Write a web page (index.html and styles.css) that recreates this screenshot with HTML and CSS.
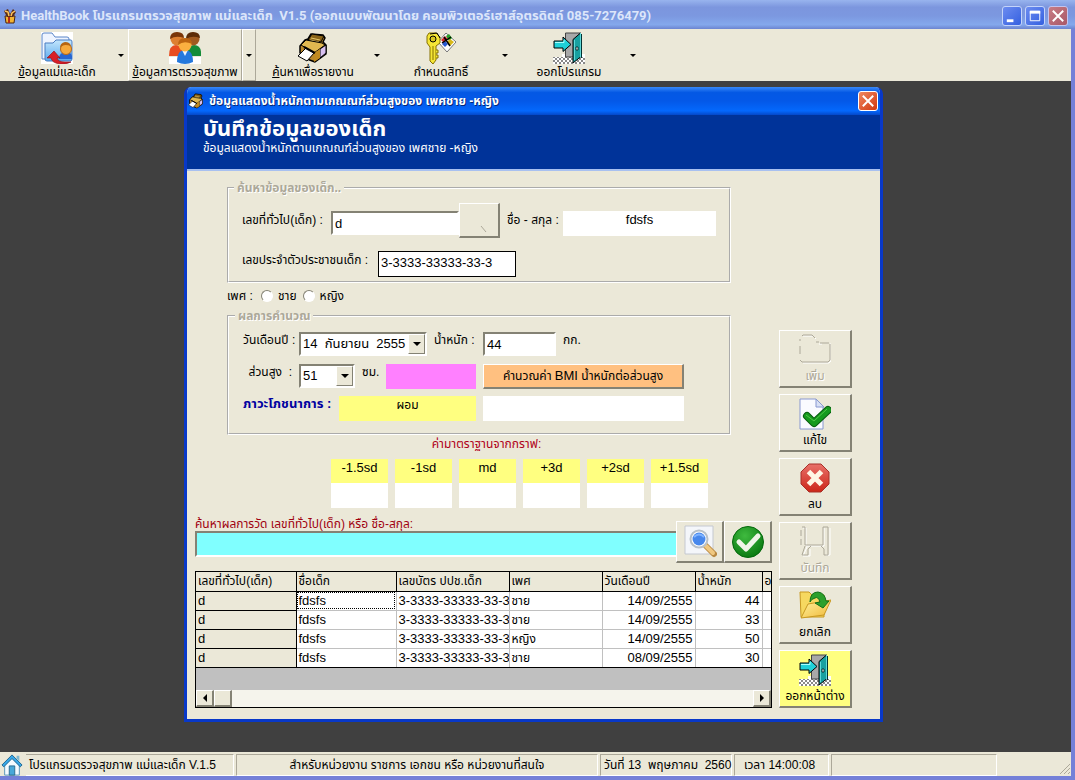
FILE: index.html
```html
<!DOCTYPE html>
<html lang="th">
<head>
<meta charset="utf-8">
<title>HealthBook</title>
<link rel="stylesheet" href="styles.css">
</head>
<body>
<svg class="defs" aria-hidden="true">
  <symbol id="door" viewBox="0 0 32 32">
    <path d="M0 25h9v-3h23v10H0z" fill="#fff"/>
    <path d="M0 25h32v7H0z" fill="url(#hatch)"/>
    <path d="M12.500 1h15v24h-15z" fill="#a8a8a8" stroke="#444"/>
    <path d="M20 7.500L27.500 1v24L20 31z" fill="#18a0a0" stroke="#000"/>
    <path d="M27.500 1v24M21.500 8v20" stroke="#60d8d8" stroke-width="1"/>
    <path d="M28.500 2v24" stroke="#033" stroke-width="1"/>
    <path d="M1 9h9V5l8 7.500-8 7V16H1z" fill="#20d0d8" stroke="#000"/>
    <path d="M2 10.500h9V8" fill="none" stroke="#aff"/>
    <path d="M23 15h2v3h-2z" fill="#dff" stroke="#000" stroke-width=".7"/>
  </symbol>
  <symbol id="printer" viewBox="0 0 32 32">
    <path d="M3 14L8 8l3-1 3-5 12 1 2 3-2 4 3 3v9L18 30l-8-3-7-6z" fill="#b8862a" stroke="#000" stroke-width="1.500" stroke-linejoin="round"/>
    <path d="M11 8l4-6 12 2-3 6z" fill="#8a6418" stroke="#000"/>
    <path d="M14 6l9 2M13 8l9 2" stroke="#e8c868"/>
    <path d="M4 13l5-5 16 3 3 2-11 8z" fill="#e0b850" stroke="#000"/>
    <path d="M23 17l6-4v8l-6 5z" fill="#d8c0f0" stroke="#000"/>
    <path d="M17 21l6-4v9l-6 4z" fill="#c08a20"/>
    <path d="M1 24l8-8 8 5-7 8z" fill="#fff" stroke="#000"/>
    <path d="M7 15l11 6" stroke="#000" stroke-width="2"/>
  </symbol>
  <pattern id="hatch" width="4" height="4" patternUnits="userSpaceOnUse"><path d="M0 0h2v2H0zM2 2h2v2H2z" fill="#888"/></pattern>
  <radialGradient id="greenBall" cx=".4" cy=".3" r=".8"><stop offset="0" stop-color="#3fba3f"/><stop offset="1" stop-color="#04730c"/></radialGradient>
  <linearGradient id="folderBlue" x2="0" y2="1"><stop offset="0" stop-color="#c4e6fc"/><stop offset="1" stop-color="#58a8ee"/></linearGradient>
  <linearGradient id="redStop" x2="0" y2="1"><stop offset="0" stop-color="#e87068"/><stop offset="1" stop-color="#cc2618"/></linearGradient>
  <linearGradient id="folderYellow" x2="1" y2="1"><stop offset="0" stop-color="#fff3a0"/><stop offset="1" stop-color="#f0b838"/></linearGradient>
</svg>

<div class="app">
  <header class="titlebar">
    <svg class="icon16" viewBox="0 0 16 16"><path d="M3 8h10l-1 7H4z" fill="#f3b431" stroke="#4b2410"/><path d="M6 8h2v7H6z" fill="#b52b18"/><path d="M2 3l4-2 2 5 3-5 3 3-3 5H5z" fill="#592b18"/><path d="M3 3l3 1 1 4M13 3l-3 2-1 3" stroke="#ffc45a" stroke-width="1.500" fill="none"/></svg>
    <h1>HealthBook โปรแกรมตรวจสุขภาพ แม่และเด็ก&nbsp; V1.5 (ออกแบบพัฒนาโดย คอมพิวเตอร์เฮาส์อุตรดิตถ์ 085-7276479)</h1>
    <div class="caption-buttons">
      <button class="cap" aria-label="Minimize"><svg viewBox="0 0 19 19"><path d="M4 13h7v3H4z" fill="#fff"/></svg></button>
      <button class="cap" aria-label="Maximize"><svg viewBox="0 0 19 19"><path d="M4.500 4.500h10v10h-10z" fill="none" stroke="#fff"/><path d="M4 4h11v3H4z" fill="#fff"/></svg></button>
      <button class="cap cap-close dim" aria-label="Close"><svg viewBox="0 0 19 19"><path d="M4 4l11 11M15 4L4 15" stroke="#fff" stroke-width="2"/></svg></button>
    </div>
  </header>

  <div class="frame">
    <nav class="toolbar">
      <div class="tool">
        <button class="tool-main">
          <svg viewBox="0 0 32 32"><path d="M0 0h32v32H0z" fill="#fff"/><path d="M1 27V3q0-2 2-2h8l3 4h12q2 0 2 2v20z" fill="#eef4ff" stroke="#5b86c8"/><path d="M4 27V11h8l3-3h15q1 0 1 2v17q0 2-2 2H6q-2 0-2-2z" fill="url(#folderBlue)" stroke="#4a7cc0"/><path d="M18 27q0-7 7-7t6 7z" fill="#2866d0"/><circle cx="25" cy="17" r="5.500" fill="#f6a93c" stroke="#b86818"/><path d="M19 16q3-5 11-2-1-4-6-4-5 1-5 6z" fill="#b66512"/><path d="M6 26l7-7 6 7h-3q1 4 8 4h6q-6 3-11 2-8-1-9-6z" fill="#d81e28" stroke="#8c0c14" stroke-width=".6"/></svg>
          <span><u>ข้</u>อมูลแม่และเด็ก</span>
        </button>
        <button class="tool-drop" aria-label="เมนูย่อย"><i class="tri"></i></button>
      </div>
      <div class="tool raised">
        <button class="tool-main">
          <svg viewBox="0 0 32 32"><path d="M0 25h32v7H0z" fill="#fff"/><path d="M0 24q0-11 7-11t8 11z" fill="#e84d20"/><path d="M17 24q0-11 8-11t7 11z" fill="#148c38"/><circle cx="8" cy="7" r="6.500" fill="#dd8030"/><path d="M1 7q0-7 7-7t7 6q-8-3-14 1z" fill="#7a3608"/><circle cx="24" cy="7" r="6.500" fill="#a05a20"/><path d="M17 7q0-7 7-7t7 6q-8-3-14 1z" fill="#5c2c08"/><path d="M8 30q0-12 8-12t8 12q-8 4-16 0z" fill="#2478dc"/><path d="M13 18l3 6 3-6z" fill="#e8f2ff"/><circle cx="16" cy="13" r="6.500" fill="#fbb040"/><path d="M9 13q0-7 7-7t7 6q-8-4-14 1z" fill="#bc6410"/></svg>
          <span><u>ข้</u>อมูลการตรวจสุขภาพ</span>
        </button>
        <button class="tool-drop" aria-label="เมนูย่อย"><i class="tri"></i></button>
      </div>
      <div class="tool">
        <button class="tool-main"><svg><use href="#printer"/></svg><span><u>ค้</u>นหาเพื่อรายงาน</span></button>
        <button class="tool-drop" aria-label="เมนูย่อย"><i class="tri"></i></button>
      </div>
      <div class="tool">
        <button class="tool-main">
          <svg viewBox="0 0 32 32"><path d="M13 10l8-9 10 9-9 10z" fill="#fff" stroke="#777"/><path d="M16 8l4-4 3 3-4 4z" fill="#d02828"/><path d="M21 4l3-2 3 4-3 3z" fill="#28a028"/><path d="M17 12l3-3 3 3-3 3z" fill="#2858d0"/><path d="M22 10l3-3 4 3-4 4z" fill="#d8b818"/><path d="M17 11l9-6M19 5l6 9" stroke="#000" stroke-width="1.500"/><path d="M4 1h7l4 4v6l-4 3v14l-3 4-3-3V15L2 11V4z" fill="#f5e636" stroke="#857000"/><path d="M8 14v14M11 18h2v3h-2M11 23h2v3h-2" stroke="#857000" fill="#f5e636"/><circle cx="8" cy="7" r="3" fill="#d8c820" stroke="#000"/><path d="M5 2l7-1 3 5" fill="none" stroke="#000"/></svg>
          <span>กำหนดสิทธิ์</span>
        </button>
        <button class="tool-drop" aria-label="เมนูย่อย"><i class="tri"></i></button>
      </div>
      <div class="tool">
        <button class="tool-main"><svg><use href="#door"/></svg><span>ออกโปรแกรม</span></button>
        <button class="tool-drop" aria-label="เมนูย่อย"><i class="tri"></i></button>
      </div>
    </nav>

    <main class="desktop">
      <section class="dialog">
        <header class="dialog-title">
          <svg class="icon16" viewBox="0 0 32 32"><use href="#printer"/></svg>
          <h2>ข้อมูลแสดงน้ำหนักตามเกณณฑ์ส่วนสูงของ เพศชาย -หญิง</h2>
          <button class="cap cap-close" aria-label="Close"><svg viewBox="0 0 19 19"><path d="M4 4l11 11M15 4L4 15" stroke="#fff" stroke-width="2"/></svg></button>
        </header>
        <div class="banner">
          <h3>บันทึกข้อมูลของเด็ก</h3>
          <p>ข้อมูลแสดงน้ำหนักตามเกณณฑ์ส่วนสูงของ เพศชาย -หญิง</p>
        </div>
        <div class="dialog-body">
          <form class="content">
            <div class="panels">
              <fieldset class="search-child">
                <legend>ค้นหาข้อมูลของเด็ก..</legend>
                <div class="line line-id">
                  <label class="lbl-id" for="childId">เลขที่ทั่วไป(เด็ก) :</label>
                  <input id="childId" class="field in-id" type="text" value="d">
                  <button type="button" class="btn btn-pick" aria-label="ค้นหา"><svg viewBox="0 0 8 8"><path d="M1 1l5 6" stroke="#aca899"/></svg></button>
                  <label class="lbl-name" for="childName">ชื่อ - สกุล :</label>
                  <output id="childName" class="box box-name">fdsfs</output>
                </div>
                <div class="line">
                  <label class="lbl-card" for="cardNo">เลขประจำตัวประชาชนเด็ก :</label>
                  <input id="cardNo" class="in-card" type="text" value="3-3333-33333-33-3">
                </div>
              </fieldset>
              <div class="sex" role="radiogroup" aria-label="เพศ">
                <span>เพศ :</span>
                <label><input type="radio" name="sex">ชาย</label>
                <label><input type="radio" name="sex">หญิง</label>
              </div>
              <fieldset class="result">
                <legend>ผลการคำนวณ</legend>
                <div class="pair">
                  <div class="left">
                    <label class="lbl-short" for="date">วันเดือนปี :</label>
                    <span class="combo combo-date"><select id="date"><option>14 &nbsp;กันยายน &nbsp;2555</option></select><i class="arrow"><i class="tri"></i></i></span>
                    <label class="lbl-unit" for="weight">น้ำหนัก :</label>
                  </div>
                  <input id="weight" class="field in-weight" type="text" value="44">
                  <span>กก.</span>
                </div>
                <div class="pair">
                  <div class="left">
                    <label class="lbl-short" for="height">ส่วนสูง &nbsp;:</label>
                    <span class="combo combo-height"><select id="height"><option>51</option></select><i class="arrow"><i class="tri"></i></i></span>
                    <span class="unit">ซม.</span>
                    <output class="box pink" aria-label="BMI"></output>
                  </div>
                  <button type="button" class="btn btn-bmi">คำนวณค่า <span class="latin">BMI</span> น้ำหนักต่อส่วนสูง</button>
                </div>
                <div class="pair">
                  <div class="left">
                    <label class="lbl-status" for="status">ภาวะโภชนาการ :</label>
                    <output id="status" class="box yellow">ผอม</output>
                  </div>
                  <output class="box box-wide" aria-label="ผลการคำนวณ"></output>
                </div>
              </fieldset>
            </div>

            <p class="std-title">ค่ามาตราฐานจากกราฟ:</p>
            <dl class="std">
              <div><dt>-1.5sd</dt><dd></dd></div>
              <div><dt>-1sd</dt><dd></dd></div>
              <div><dt>md</dt><dd></dd></div>
              <div><dt>+3d</dt><dd></dd></div>
              <div><dt>+2sd</dt><dd></dd></div>
              <div><dt>+1.5sd</dt><dd></dd></div>
            </dl>

            <div class="lookup">
              <div class="lookup-field">
                <label for="lookup">ค้นหาผลการวัด เลขที่ทั่วไป(เด็ก) หรือ ชื่อ-สกุล:</label>
                <input id="lookup" class="field" type="text">
              </div>
              <button type="button" class="btn btn-icon" aria-label="ค้นหา"><svg viewBox="0 0 34 34"><path d="M2 1h28v28H2z" fill="#f4f6fa" stroke="#c4c8d0"/><path d="M23 21l8 8" stroke="#b88840" stroke-width="6" stroke-linecap="round"/><path d="M23 21l7 7" stroke="#f0c880" stroke-width="4" stroke-linecap="round"/><circle cx="16" cy="14" r="8.500" fill="#fff" stroke="#b8c0c8" stroke-width="2"/><circle cx="16" cy="14" r="6.500" fill="#4888ec"/><path d="M11 12q5-5 10 0" stroke="#80b4ff" stroke-width="2" fill="none"/></svg></button>
              <button type="button" class="btn btn-icon" aria-label="ตกลง"><svg viewBox="0 0 34 34"><circle cx="17" cy="17" r="15.500" fill="url(#greenBall)" stroke="#04690c"/><path d="M8 17l7 7 12-13" fill="none" stroke="#f0f5e8" stroke-width="5" stroke-linecap="round" stroke-linejoin="round"/></svg></button>
            </div>

            <div class="grid">
              <table>
                <colgroup><col class="c100"><col class="c100"><col class="c113"><col class="c93"><col class="c93"><col class="c67"><col></colgroup>
                <thead><tr><th>เลขที่ทั่วไป(เด็ก)</th><th>ชื่อเด็ก</th><th>เลขบัตร ปปช.เด็ก</th><th>เพศ</th><th>วันเดือนปี</th><th>น้ำหนัก</th><th>อ</th></tr></thead>
                <tbody>
                  <tr><th>d</th><td class="focus">fdsfs</td><td>3-3333-33333-33-3</td><td class="thai-cell">ชาย</td><td class="num">14/09/2555</td><td class="num">44</td><td></td></tr>
                  <tr><th>d</th><td>fdsfs</td><td>3-3333-33333-33-3</td><td class="thai-cell">ชาย</td><td class="num">14/09/2555</td><td class="num">33</td><td></td></tr>
                  <tr><th>d</th><td>fdsfs</td><td>3-3333-33333-33-3</td><td class="thai-cell">หญิง</td><td class="num">14/09/2555</td><td class="num">50</td><td></td></tr>
                  <tr><th>d</th><td>fdsfs</td><td>3-3333-33333-33-3</td><td class="thai-cell">ชาย</td><td class="num">08/09/2555</td><td class="num">30</td><td></td></tr>
                </tbody>
              </table>
              <div class="scroll">
                <button type="button" class="btn" aria-label="เลื่อนซ้าย"><i class="tri-left"></i></button>
                <span class="btn thumb"></span>
                <button type="button" class="btn end" aria-label="เลื่อนขวา"><i class="tri-right"></i></button>
              </div>
            </div>
          </form>

          <aside class="actions">
            <button class="btn" disabled><svg viewBox="0 0 32 32"><path d="M4 2h10l3 3M20 10h3M32 9v18l-2 2H4" fill="none" stroke="#fff"/><path d="M1 7V5M3 2l1-1h9l3 3M17 8h3M21 9h9M31 10v16l-2 2H3l-2-2M1 12v8" fill="none" stroke="#aca899"/></svg><span>เพิ่ม</span></button>
            <button class="btn"><svg viewBox="0 0 32 32"><path d="M1 1h16l7 7v23H1z" fill="#fafbff" stroke="#8898d0"/><path d="M17 1v8h8z" fill="#d8e0f4" stroke="#8898d0"/><path d="M8 18l7 7L29 12" fill="none" stroke="#085c10" stroke-width="8" stroke-linecap="round" stroke-linejoin="round"/><path d="M8 18l7 7L29 12" fill="none" stroke="#169a1e" stroke-width="6" stroke-linecap="round" stroke-linejoin="round"/><path d="M7 17l8 6L28 11" fill="none" stroke="#50c848"/></svg><span>แก้ไข</span></button>
            <button class="btn"><svg viewBox="0 0 32 32"><path d="M10 2h12l8 8v12l-8 8H10l-8-8V10z" fill="url(#redStop)" stroke="#a83028"/><path d="M9.500 9.500l13 13M22.500 9.500l-13 13" stroke="#fff6e4" stroke-width="5"/></svg><span>ลบ</span></button>
            <button class="btn" disabled><svg viewBox="0 0 32 32"><path d="M4 2h3v18h18V2M8 21l-4 9h7v-7M27 29h4V2" fill="none" stroke="#fff"/><path d="M3 1h3v18h18V1h5v28h-4v-6l-3-3M6 20l-3 9h6v-6l3-3M2 4v6M2 13v6" fill="none" stroke="#aca899"/></svg><span>บันทึก</span></button>
            <button class="btn"><svg viewBox="0 0 32 32"><path d="M1 2h9l3 3h12v22H2z" fill="#f6d860" stroke="#c89820"/><path d="M2 28l7-14 23-4-7 15z" fill="url(#folderYellow)" stroke="#c89820"/><path d="M11 12q0-10 8-10 7 1 8 9h3l-6 7-8-5 5-1q-2-6-5-4-4 1-5 4z" fill="#2ca02c" stroke="#107018"/></svg><span>ยกเลิก</span></button>
            <button class="btn exit"><svg><use href="#door"/></svg><span>ออกหน้าต่าง</span></button>
          </aside>
        </div>
      </section>
    </main>

    <footer class="status">
      <svg viewBox="0 0 24 24"><path d="M4 12v11h16V12l-8-8z" fill="#f4fbff" stroke="#5090b8"/><path d="M9 13h6v10H9z" fill="#48a8d8" stroke="#28688c"/><path d="M1 12L12 1l11 11-2 2-9-9-9 9z" fill="#38a8e8" stroke="#18608c"/><path d="M17 2h3v6l-3-3z" fill="#80b8d0"/></svg>
      <span class="s1">โปรแกรมตรวจสุขภาพ แม่และเด็ก V.1.5</span>
      <span class="s2">สำหรับหน่วยงาน ราชการ เอกชน หรือ หน่วยงานที่สนใจ</span>
      <span class="s3">วันที่ 13 &nbsp;พฤษภาคม &nbsp;2560</span>
      <span class="s4">เวลา 14:00:08</span>
      <span class="s5"></span>
      <svg class="grip" viewBox="0 0 12 12"><path d="M11 1L1 11M11 5l-6 6M11 9l-2 2" stroke="#aca899"/></svg>
    </footer>
  </div>
</div>
</body>
</html>
```
FILE: styles.css
```css
* { box-sizing: border-box; }
body {
  margin: 0;
  background: #404040;
  color: #000;
  font: 12px/14px "Liberation Sans", "Noto Sans Thai", sans-serif;
}
h1, h2, h3, p, dl, dd { margin: 0; }
button, input, select { font: inherit; color: inherit; }
button { padding: 0; }
.defs { position: absolute; width: 0; height: 0; }
.icon16 { width: 16px; height: 16px; flex: none; }

.app { display: flex; flex-direction: column; min-height: 100vh; background: #7480d8; }

.titlebar {
  display: flex; align-items: center; gap: 3px;
  height: 29px; padding: 2px 7px 0 2px;
  background: linear-gradient(#98b4ee 0, #7c96de 25%, #7c98e0 55%, #84a8ec 85%, #6c84d0);
  color: #dce6fa;
}
.titlebar h1 { flex: 1; font: bold 13px/20px Roboto, "Noto Sans Thai", sans-serif; white-space: nowrap; }
.caption-buttons { display: flex; gap: 3px; }
.cap {
  width: 20px; height: 20px; flex: none;
  border: 1px solid #c4d4fa; border-radius: 3px;
  background: linear-gradient(135deg, #6c8cf0, #3460e0);
}
.cap svg { display: block; width: 18px; height: 18px; }
.cap-close { border-color: #fff; background: linear-gradient(135deg, #f08860, #d03810); }
.cap-close.dim { border-color: #c4c4ee; background: linear-gradient(135deg, #c87c84, #a85868); }

.frame { flex: 1; display: flex; flex-direction: column; margin: 0 4px 4px 0; background: #ebe8d8; }

.toolbar { display: flex; height: 52px; }
.tool { display: flex; width: 128px; }
.tool-main {
  width: 114px; border: 1px solid transparent; background: none;
  display: flex; flex-direction: column; align-items: center; gap: 1px;
}
.tool-main svg { width: 32px; height: 32px; margin-top: 2px; flex: none; }
.tool-main span { line-height: 14px; white-space: nowrap; }
.tool-drop { width: 14px; border: 1px solid transparent; background: none; display: flex; align-items: center; justify-content: center; }
.raised .tool-main, .raised .tool-drop { border-color: #fff #aca899 #aca899 #fff; }
.tri { border: 3px solid transparent; border-top-color: #000; border-bottom: 0; }

.desktop { flex: 1; padding: 6px 188px 30px 184px; background: #404040; }
.dialog {
  min-width: 690px; border: 3px solid #0838c8; border-top: 0;
  border-radius: 7px 7px 0 0; background: #ebe8d8; overflow: hidden;
}
.dialog-title {
  display: flex; align-items: center; gap: 5px; height: 28px; padding: 0 2px 0 1px;
  background: linear-gradient(#3888f8 0, #0458e4 20%, #0458e8 50%, #0468fc 85%, #0448c8);
  color: #fff;
}
.dialog-title h2 { flex: 1; font-size: 12px; line-height: 20px; text-shadow: 1px 1px #042878; white-space: nowrap; }
.banner { height: 56px; padding: 2px 16px; background: #003399; border-bottom: 2px solid #a8c0f0; color: #fff; }
.banner h3 { font-size: 22px; line-height: 24px; }
.banner p { line-height: 14px; }

.dialog-body { display: flex; gap: 7px; padding: 10px 28px 11px 8px; }
.content { flex: 1; min-width: 0; }
.panels { margin: 0 41px 0 32px; }
fieldset { margin: 0; min-width: 0; border: 2px groove #fff; }
legend { margin-left: -8px; padding: 0 3px; line-height: 14px; font-weight: bold; color: #aca899; text-shadow: 1px 1px #fff; }
label { white-space: nowrap; }

.line, .pair, .left { display: flex; align-items: flex-start; }
.search-child { padding: 8px 13px 6px; height: 102px; }
.line-id { height: 48px; align-items: stretch; }
.line-id > label { padding-top: 10px; }
.lbl-id { width: 89px; }
.lbl-name { margin-left: 7px; width: 56px; }
.lbl-card { width: 136px; padding-top: 2px; }
.field {
  min-width: 0; height: 24px; padding: 0 2px; border: 2px solid; border-color: #848274 #fff #fff #848274;
  background: #fff; font-size: 13px; border-radius: 0;
}
.in-id { flex: 1; margin-top: 8px; }
.in-card { width: 138px; height: 26px; border: 1px solid #000; padding: 0 2px 4px; background: #fff; font-size: 13px; }
.btn {
  border: solid; border-width: 1px 2px 2px 1px; border-color: #fff #848274 #848274 #fff; background: #ebe8d8; border-radius: 0;
}
.btn-pick { width: 41px; height: 35px; display: flex; justify-content: center; align-items: flex-end; padding: 0 0 3px 10px; }
.btn-pick svg { width: 8px; height: 8px; }
.box { display: block; height: 25px; background: #fff; text-align: center; line-height: 18px; font-size: 13px; }
.box-name { width: 153px; margin-top: 8px; }

.sex { display: flex; align-items: center; gap: 6px; height: 26px; }
.sex span { width: 28px; white-space: nowrap; }
.sex label { display: flex; align-items: center; gap: 5px; }
.sex input {
  appearance: none; width: 12px; height: 12px; margin: 0; border-radius: 50%;
  background: #fff; border: 1px solid; border-color: #848274 #fff #fff #848274;
}

.result { padding: 9px 14px 0; height: 126px; }
.pair { height: 32px; }
.left { width: 240px; gap: 7px; padding-right: 7px; }
.left label, .unit, .pair > span { padding-top: 1px; }
.pair > span { margin-left: 7px; }
.lbl-short { width: 49px; text-align: right; }
.left .lbl-status { width: 89px; font-size: 13px; font-weight: bold; color: #0000a0; }
.combo { position: relative; height: 24px; border: 2px solid; border-color: #848274 #fff #fff #848274; background: #fff; }
.combo select { appearance: none; width: 100%; height: 20px; border: 0; padding: 0 2px; background: none; }
.combo-date { width: 128px; }
.combo-date, .combo-height { font-size: 13px; }
.combo-height { width: 56px; }
.arrow {
  position: absolute; top: 0; right: 0; bottom: 0; width: 17px; pointer-events: none;
  display: flex; align-items: center; justify-content: center;
  background: #ebe8d8; border: 1px solid; border-color: #fff #848274 #848274 #fff;
}
.arrow .tri { border-width: 4px 4px 0; }
.unit { width: 17px; }
.pink { flex: 1; background: #ff80ff; }
.yellow { flex: 1; background: #ffff80; font-size: 12px; }
.in-weight { width: 73px; }
.btn-bmi { width: 201px; height: 25px; background: #ffc080; white-space: nowrap; }
.latin { font-size: 13px; }
.box-wide { width: 201px; }

.std-title { margin: 2px 0 8px; padding-left: 6px; text-align: center; color: #b00018; }
.std { display: grid; grid-template-columns: repeat(6, 57px); gap: 7px; margin-left: 136px; }
.std dt { height: 24px; background: #ffff80; text-align: center; font-size: 13px; line-height: 18px; }
.std dd { height: 25px; background: #fff; }

.lookup { display: flex; align-items: flex-end; margin-top: 9px; height: 46px; }
.lookup-field { flex: 1; align-self: stretch; display: flex; flex-direction: column; }
.lookup-field label { line-height: 14px; color: #a00010; }
.lookup-field .field { width: 100%; height: 26px; background: #80ffff; border-right: 0; }
.btn-icon { width: 48px; height: 42px; display: flex; align-items: center; justify-content: center; }
.btn-icon svg { width: 34px; height: 34px; }

.grid { margin-top: 8px; border: 1px solid #000; background: #c0c0c0; overflow: hidden; }
table { width: 100%; table-layout: fixed; border-collapse: collapse; background: #fff; }
th, td { height: 19px; padding: 0 2px; overflow: hidden; white-space: nowrap; text-align: left; font-weight: normal; }
th { background: #ebe8d8; border: 1px solid #000; }
td { border: 1px solid #c0c0c0; }
thead th, tr > :first-child { border-top-color: #000; }
tr > :first-child { border-left: 0; }
tr > :last-child { border-right: 0; }
thead th { border-top: 0; }
tbody th, td { font-size: 13px; }
tbody tr:last-child > * { border-bottom: 1px solid #000; }
td.thai-cell { font-size: 12px; }
td.num { text-align: right; }
td.focus { outline: 1px dotted #000; outline-offset: -2px; }
.c100 { width: 100px; }
.c113 { width: 113px; }
.c93 { width: 93px; }
.c67 { width: 67px; }
.scroll { display: flex; height: 17px; margin-top: 22px; background: #f5f4ec; }
.scroll .btn { width: 18px; display: flex; align-items: center; justify-content: center; }
.scroll .end { margin-left: auto; }
.tri-left { border: 4px solid transparent; border-right-color: #000; border-left: 0; }
.tri-right { border: 4px solid transparent; border-left-color: #000; border-right: 0; }

.actions { display: flex; flex-direction: column; justify-content: flex-end; gap: 6px; width: 73px; }
.actions .btn { height: 58px; display: flex; flex-direction: column; align-items: center; gap: 3px; padding-top: 3px; }
.actions svg { width: 32px; height: 32px; flex: none; }
.actions span { line-height: 14px; white-space: nowrap; }
.actions .btn:disabled { color: #aca899; text-shadow: 1px 1px #fff; }
.actions .exit { background: #ffff80; }

.status { display: flex; height: 24px; padding-top: 2px; gap: 2px; white-space: nowrap; }
.status > svg { width: 24px; height: 22px; }
.status span { border: 1px solid; border-color: #aca899 #fff #fff #aca899; line-height: 21px; padding: 0 3px; }
.status .s1 { width: 208px; border-left: 0; }
.status .s2 { flex: 1; text-align: center; }
.status .s3 { width: 132px; }
.status .s4 { width: 95px; padding-left: 9px; }
.status .s5 { width: 166px; }
.status > .grip { width: 12px; height: 12px; margin: 9px 0 0 60px; }
```
